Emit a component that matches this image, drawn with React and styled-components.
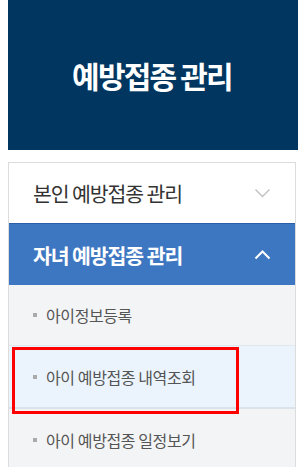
import React from 'react'
import styled, { createGlobalStyle } from 'styled-components'

const GlobalStyle = createGlobalStyle`
  html, body {
    margin: 0;
    padding: 0;
    background: #fff;
    overflow: hidden;
  }
  body {
    padding: 0 0 0 8px;
    font-family: "Noto Sans CJK KR", "Noto Sans", sans-serif;
  }
`

const Sidebar = styled.aside`
  width: 290px;
`

const TitleBox = styled.div`
  height: 150px;
  background: #00365f;
  display: flex;
  align-items: center;
  justify-content: center;
  color: #fff;
  font-size: 30px;
  font-weight: 700;
  letter-spacing: -1.8px;
  padding-right: 2px;
`

const Menu = styled.ul`
  list-style: none;
  margin: 12px 0 0;
  padding: 0;
  width: 288px;
  border: 1px solid #dcdcdc;
  border-bottom: none;
  box-sizing: border-box;
`

const MenuHead = styled.div`
  display: flex;
  align-items: center;
  justify-content: space-between;
  height: ${p => (p.$open ? '62px' : '60px')};
  padding: 0 24px 0 24px;
  box-sizing: border-box;
  background: ${p => (p.$open ? '#3e77c1' : '#fff')};
  border-top: ${p => (p.$open ? '1px solid #2b5ea8' : 'none')};
  color: ${p => (p.$open ? '#fff' : '#333')};
  font-size: 20.5px;
  font-weight: ${p => (p.$open ? 700 : 400)};
  letter-spacing: -1.1px;
`

const SubList = styled.ul`
  list-style: none;
  margin: 0;
  padding: 0;
  background: #f3f4f6;
`

const SubItem = styled.li`
  position: relative;
  display: flex;
  align-items: center;
  gap: 9px;
  height: ${p => (p.$active ? '63px' : '61px')};
  padding-left: 24px;
  box-sizing: border-box;
  background: ${p => (p.$active ? '#ebf4fd' : '#f3f4f6')};
  border-bottom: ${p => (p.$active ? '2px solid #dbe2ea' : '1px solid #e1e7ee')};
  color: #555;
  font-size: 16px;
  letter-spacing: -0.4px;

  &:last-child {
    border-bottom: none;
  }
`

const Bullet = styled.span`
  width: 4px;
  height: 4px;
  background: #aaa;
  flex: none;
`

const Highlight = styled.span`
  position: absolute;
  z-index: 1;
  left: 3px;
  top: 1px;
  width: 227px;
  height: 67px;
  border: 3px solid #ff0000;
  box-sizing: border-box;
  pointer-events: none;
`

const Chevron = ({ up, color, width }) => (
  <svg width="17" height="10" viewBox="0 0 17 10" fill="none">
    <path
      d={up ? 'M1.5 8.5 L8.5 1.5 L15.5 8.5' : 'M1.5 1.5 L8.5 8.5 L15.5 1.5'}
      stroke={color}
      strokeWidth={width}
    />
  </svg>
)

const subItems = ['아이정보등록', '아이 예방접종 내역조회', '아이 예방접종 일정보기']

export default function App() {
  return (
    <>
      <GlobalStyle />
      <Sidebar>
        <TitleBox>예방접종 관리</TitleBox>
        <Menu>
          <li>
            <MenuHead>
              본인 예방접종 관리
              <Chevron color="#c0c0c0" width={1.4} />
            </MenuHead>
          </li>
          <li>
            <MenuHead $open>
              자녀 예방접종 관리
              <Chevron up color="#fff" width={2} />
            </MenuHead>
            <SubList>
              {subItems.map((label, i) => (
                <SubItem key={label} $active={i === 1}>
                  <Bullet />
                  {label}
                  {i === 1 && <Highlight />}
                </SubItem>
              ))}
            </SubList>
          </li>
        </Menu>
      </Sidebar>
    </>
  )
}
